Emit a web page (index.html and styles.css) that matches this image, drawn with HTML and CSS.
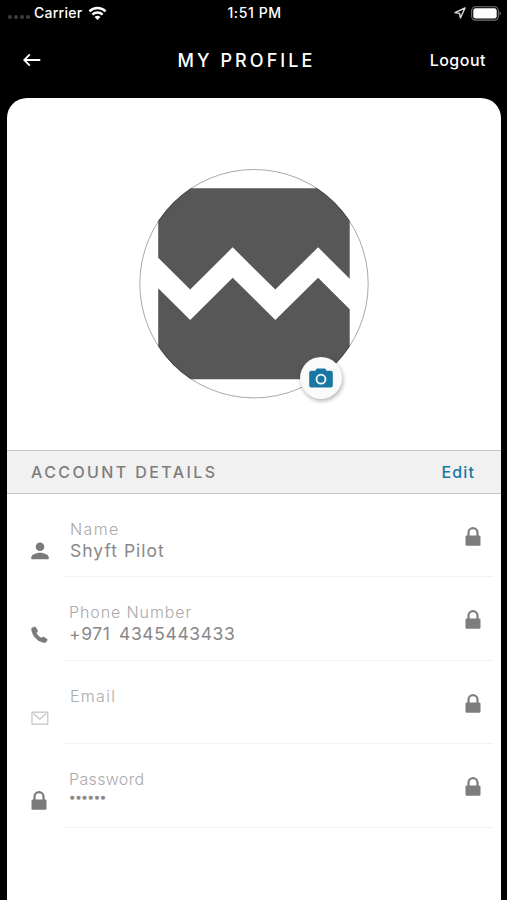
FILE: index.html
```html
<!DOCTYPE html>
<html lang="en">
<head>
<meta charset="utf-8">
<title>My Profile</title>
<link rel="stylesheet" href="styles.css">
</head>
<body>
<svg class="defs" aria-hidden="true">
  <symbol id="lock" viewBox="0 0 16 20">
    <path d="M3.500 10V5.600a4.500 4.500 0 0 1 9 0V10" fill="none" stroke="currentColor" stroke-width="2.200"/>
    <rect x=".5" y="8.500" width="15" height="10.300" rx="1.200" fill="currentColor"/>
  </symbol>
</svg>
<div class="status">
  <div class="carrier">
    <span class="dots"><i></i><i></i><i></i><i></i></span>
    <span class="carrier-name">Carrier</span>
    <svg class="wifi" viewBox="0 0 20 15"><g fill="none" stroke="#fff" stroke-width="2.5"><path d="M1.5 5.3a12 12 0 0 1 17 0"/><path d="M4.6 8.6a7.7 7.7 0 0 1 10.8 0"/></g><path d="M10 14.4l-3.1-3.1a4.4 4.4 0 0 1 6.2 0z" fill="#fff"/></svg>
  </div>
  <div class="time">1:51 PM</div>
  <div class="power">
    <svg class="locate" viewBox="0 0 12 12"><path d="M11 1L1 5.6l4.6.8L6.4 11z" fill="none" stroke="#ddd" stroke-width="1.4" stroke-linejoin="round"/></svg>
    <svg class="battery" viewBox="0 0 30 15"><rect x=".7" y=".7" width="26.6" height="13.4" rx="3.8" fill="none" stroke="#777" stroke-width="1.1"/><rect x="2.3" y="2.3" width="23.4" height="10.2" rx="2.3" fill="#fff"/><path d="M28.5 5.2q1.3.8 1.3 2.2t-1.3 2.2z" fill="#777"/></svg>
  </div>
</div>
<header class="nav">
  <svg class="back" viewBox="0 0 18 14"><path d="M6.8 1.3L1.2 7l5.6 5.7M1.5 7h15.8" fill="none" stroke="#fff" stroke-width="1.8"/></svg>
  <h1 class="title">MY PROFILE</h1>
  <span class="logout">Logout</span>
</header>
<main class="card">
  <section class="hero">
    <div class="avatar">
      <svg class="portrait" viewBox="139 169 230 230">
        <clipPath id="round"><circle cx="254" cy="283.7" r="114.5"/></clipPath>
        <g clip-path="url(#round)" fill="#575757">
          <path d="M158.2 188.2H349.7V278.7L318.1 247.3 275.3 289.6 232.7 247.3 190.2 289.6 158.2 257.8z"/>
          <path d="M158.2 288.3L190.2 320 232.7 277.7 275.3 320 318.1 277.7 349.7 309.2V379.2H158.2z"/>
        </g>
        <circle cx="254" cy="283.7" r="114.2" fill="none" stroke="#000" stroke-opacity=".34"/>
      </svg>
      <div class="camera">
        <svg class="camera-icon" viewBox="0 0 24 20"><path d="M2.2 2.8h4.2L7.8.5h8.4l1.4 2.3h4.2A2 2 0 0 1 23.8 4.8V17.6a2 2 0 0 1-2 2H2.2a2 2 0 0 1-2-2V4.8a2 2 0 0 1 2-2z" fill="#1878a3"/><circle cx="12" cy="11.2" r="4.5" fill="none" stroke="#fff" stroke-width="1.8"/></svg>
      </div>
    </div>
  </section>
  <div class="section-bar"><h2 class="section-title">ACCOUNT DETAILS</h2><span class="edit">Edit</span></div>
  <div class="row">
    <svg class="icon" viewBox="0 0 18 18"><circle cx="9" cy="4.8" r="4.3" fill="currentColor"/><path d="M.3 17.300v-2.100c0-3 5.800-4.500 8.700-4.500s8.700 1.500 8.700 4.500v2.100z" fill="currentColor"/></svg>
    <div class="field">
      <div class="text"><div class="label name">Name</div><div class="value pilot">Shyft Pilot</div></div>
      <svg class="lock"><use href="#lock"/></svg>
    </div>
  </div>
  <div class="row">
    <svg class="icon handset" viewBox="0 0 18 18"><path d="M1.200 1.800L3.700.9q.7-.2 1.100.5L6.600 4.600q.3.700-.2 1.200L5.300 7.100q1.600 3.100 4.900 5l1.500-1q.6-.4 1.200 0l3 2q.6.400.3 1.100l-1.100 1.700q-.7.900-2 .700C7.200 15.800 1.200 10.500.5 3.300Q.4 2.200 1.200 1.800z" fill="currentColor" stroke="currentColor" stroke-width=".4"/></svg>
    <div class="field">
      <div class="text"><div class="label phone">Phone Number</div><div class="value number">+971 4345443433</div></div>
      <svg class="lock"><use href="#lock"/></svg>
    </div>
  </div>
  <div class="row">
    <svg class="icon mail" viewBox="0 0 18 18"><path d="M1 3.200h15.800v11.900H1zM2.500 4.500l6.400 5.600 6.400-5.600" fill="none" stroke="currentColor" stroke-width="1.2"/></svg>
    <div class="field">
      <div class="text"><div class="label email">Email</div></div>
      <svg class="lock"><use href="#lock"/></svg>
    </div>
  </div>
  <div class="row">
    <svg class="icon key"><use href="#lock"/></svg>
    <div class="field">
      <div class="text"><div class="label password">Password</div><div class="value secret">••••••</div></div>
      <svg class="lock"><use href="#lock"/></svg>
    </div>
  </div>
</main>
</body>
</html>
```
FILE: styles.css
```css
* { box-sizing: border-box; }
html { height: 100%; background: #000; }
body {
  margin: 0;
  height: 900px;
  overflow: hidden;
  display: flex;
  flex-direction: column;
  background: #000;
  color: #fff;
  font-family: Inter, "Liberation Sans", sans-serif;
}
svg { display: block; flex: none; }
h1, h2 { margin: 0; }
.defs { display: none; }
.status {
  height: 26px;
  flex: none;
  display: grid;
  grid-template-columns: 1fr auto 1fr;
  align-items: center;
  padding: 0 6px 0 8px;
  font-size: 14px;
  font-weight: 500;
  line-height: 26px;
}
.carrier, .power { display: flex; align-items: center; }
.power { justify-content: flex-end; gap: 5px; }
.dots { display: flex; gap: 2px; width: 26px; padding-top: 8px; }
.dots i { width: 3.5px; height: 3.5px; margin-right: .5px; border-radius: 50%; background: #3c3c3c; }
.carrier-name { width: 54px; letter-spacing: .25px; }
.wifi { width: 19px; height: 15px; }
.time { font-size: 14px; letter-spacing: .6px; }
.locate { width: 12px; height: 12px; }
.battery { width: 30px; height: 15px; }
.nav {
  height: 72px;
  flex: none;
  display: grid;
  grid-template-columns: 1fr auto 1fr;
  align-items: center;
  padding: 0 21px 4px 23px;
}
.back { width: 18px; height: 14px; }
.title { margin-right: 16px; padding-top: 1px; font-size: 18px; font-weight: 500; letter-spacing: 3.05px; line-height: 24px; }
.logout { justify-self: end; font-size: 16px; font-weight: 500; letter-spacing: .5px; }
.card {
  flex: 1;
  min-height: 0;
  margin: 0 6px 0 7px;
  border-radius: 20px 20px 0 0;
  background: #fff;
  color: #7d7d7d;
}
.hero { height: 352px; display: flex; justify-content: center; padding-top: 71px; }
.avatar { position: relative; width: 230px; height: 230px; }
.portrait { width: 230px; height: 230px; }
.camera {
  position: absolute;
  left: 161px;
  top: 188px;
  width: 42px;
  height: 42px;
  border-radius: 50%;
  background: #fafafa;
  box-shadow: 1px 2px 4px rgba(0, 0, 0, .3);
  display: flex;
  align-items: center;
  justify-content: center;
}
.camera-icon { width: 24px; height: 20px; }
.section-bar {
  height: 44px;
  display: flex;
  justify-content: space-between;
  align-items: center;
  padding: 0 26px 0 24px;
  background: #f1f1f1;
  border-top: 1px solid #c9c9c9;
  border-bottom: 1px solid #c9c9c9;
}
.section-title { font-size: 16px; font-weight: 500; letter-spacing: 2.4px; }
.edit { font-size: 16px; font-weight: 500; color: #1878a3; letter-spacing: 1.1px; }
.row { height: 83.4px; display: flex; padding: 0 8px 0 24px; }
.icon { width: 18px; height: 18px; margin-top: 48px; color: #7a7a7a; }
.handset { margin-top: 49px; }
.mail { color: #c4c4c4; }
.key { width: 16px; height: 20px; margin: 47px 2px 0 0; }
.field {
  flex: 1;
  display: flex;
  justify-content: space-between;
  margin-left: 16px;
  padding: 25px 12px 0 4px;
  border-bottom: 1px solid #f2f2f2;
}
.text { white-space: nowrap; }
.label { font-size: 16px; font-weight: 300; line-height: 20px; color: #aaa; }
.name { padding-left: 1px; letter-spacing: 1.4px; }
.phone { letter-spacing: .9px; }
.email { padding-left: 1px; letter-spacing: 1.3px; }
.password { letter-spacing: .35px; }
.value { font-size: 17.5px; font-weight: 400; line-height: 23px; color: #888; }
.pilot { padding-left: 1px; letter-spacing: 1px; }
.number { letter-spacing: .6px; word-spacing: 3px; }
.lock { width: 16px; height: 20px; margin-top: 8px; color: #7d7d7d; }
.secret { font-size: 11.5px; line-height: 16px; letter-spacing: -.3px; -webkit-text-stroke: .4px #888; }
```
